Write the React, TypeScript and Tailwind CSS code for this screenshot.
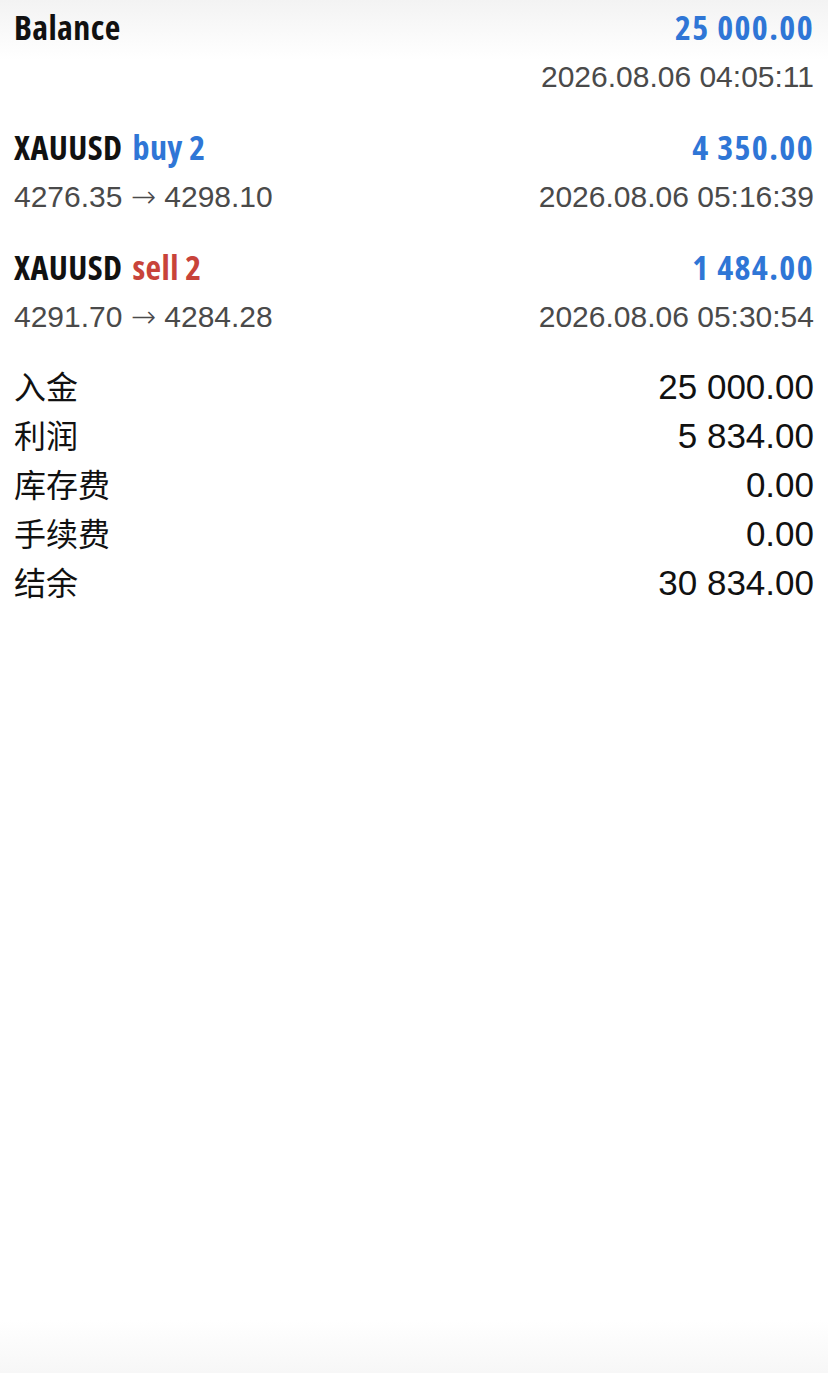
export default function App() {
  const trades = [
    { sym: 'Balance', side: '', sideColor: '', amount: '25 000.00', from: '', to: '', date: '2026.08.06 04:05:11' },
    { sym: 'XAUUSD', side: 'buy 2', sideColor: 'text-[#2f76d6]', amount: '4 350.00', from: '4276.35', to: '4298.10', date: '2026.08.06 05:16:39' },
    { sym: 'XAUUSD', side: 'sell 2', sideColor: 'text-[#c8433a]', amount: '1 484.00', from: '4291.70', to: '4284.28', date: '2026.08.06 05:30:54' },
  ];

  const summary = [
    { label: '入金', value: '25 000.00' },
    { label: '利润', value: '5 834.00' },
    { label: '库存费', value: '0.00' },
    { label: '手续费', value: '0.00' },
    { label: '结余', value: '30 834.00' },
  ];

  return (
    <div className="min-h-[1373px] bg-[linear-gradient(to_bottom,#f3f3f3_0px,#ffffff_60px,#ffffff_1320px,#f7f7f7_1373px)] px-[14px] pt-[7px]">
      {/* deals */}
      <div className="flex flex-col gap-[30px]">
        {trades.map((t, i) => (
          <div key={i} className="flex flex-col">
            <div className="flex items-baseline justify-between h-[40px] leading-[40px] text-[34px] font-bold font-stretch-75% font-['Open_Sans',sans-serif]">
              <span className="text-[#111] tracking-[0.4px]">
                {t.sym}
                {t.side && <span className={`ml-[10px] ${t.sideColor}`}>{t.side}</span>}
              </span>
              <span className="text-[#2f76d6] tracking-[1.4px]">{t.amount}</span>
            </div>
            <div className="mt-[10px] flex items-baseline justify-between h-[40px] leading-[40px] text-[30px] text-[#4a4a4a] font-['Liberation_Sans',sans-serif]">
              <span>
                {t.from && (
                  <>
                    {t.from} <span className="font-['DejaVu_Sans',sans-serif] font-light">→</span> {t.to}
                  </>
                )}
              </span>
              <span>{t.date}</span>
            </div>
          </div>
        ))}
      </div>

      {/* totals */}
      <div className="mt-[24px] flex flex-col">
        {summary.map((s, i) => (
          <div key={i} className="flex items-baseline justify-between h-[49px] leading-[49px] text-[#111]">
            <span className="text-[32px] font-['Noto_Sans_CJK_SC',sans-serif]">{s.label}</span>
            <span className="text-[35px] font-['Liberation_Sans',sans-serif]">{s.value}</span>
          </div>
        ))}
      </div>
    </div>
  );
}
